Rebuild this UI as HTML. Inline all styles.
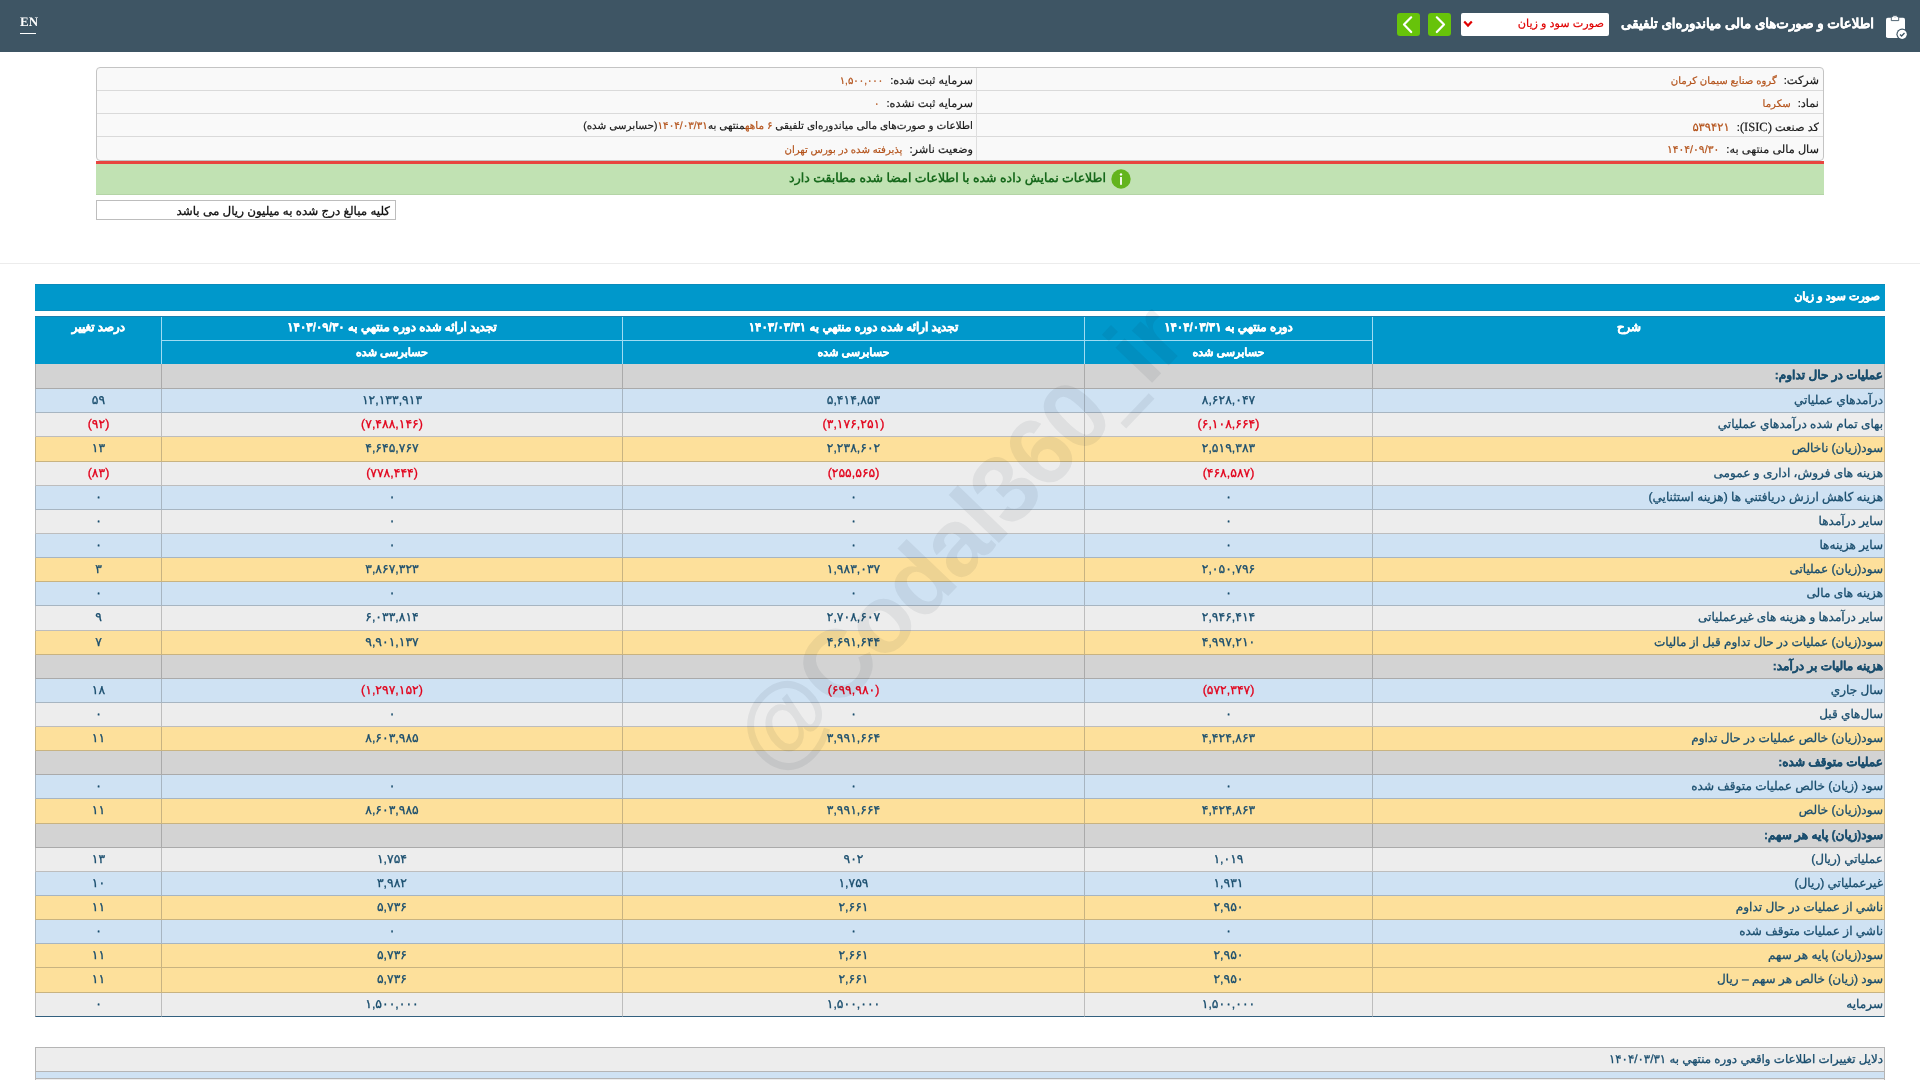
<!DOCTYPE html>
<html lang="fa" dir="rtl">
<head>
<meta charset="utf-8">
<title>اطلاعات و صورت‌های مالی میاندوره‌ای تلفیقی</title>
<style>
*{box-sizing:border-box;margin:0;padding:0}
html,body{width:1920px;height:1080px;overflow:hidden;background:#fff}
body{will-change:transform;font-family:"Liberation Sans",sans-serif;text-rendering:geometricPrecision;font-size:12px;color:#1a4e6e;position:relative;direction:rtl}
.lat{font-family:"Liberation Serif",serif;font-size:12.5px}

/* top bar */
#top{position:absolute;left:0;top:0;width:1920px;height:52px;background:#3e5564}
#top .en{position:absolute;left:20px;top:13px;width:16px;height:21px;color:#fff;font-family:"Liberation Serif",serif;font-weight:bold;font-size:13px;line-height:17px;text-align:center;border-bottom:1px solid #fff;direction:ltr}
#top .ttl{position:absolute;right:46px;top:11px;height:26px;line-height:26px;color:#fff;font-size:13.3px;font-weight:bold;white-space:nowrap;-webkit-text-stroke:.3px #fff}
#top .ico{position:absolute;left:1884px;top:13px;width:24px;height:27px}
#top .sel{position:absolute;left:1461px;top:13px;width:148px;height:23px;background:#fff;border-radius:2px;color:#e00000;-webkit-text-stroke:.2px #e00000;font-size:11.2px;line-height:22px;padding-right:5px;white-space:nowrap}
#top .sel svg{position:absolute;left:2px;top:7px}
#top .btn{position:absolute;top:13px;width:23px;height:23px;background:#67c30a;border-radius:3px}
#top .btn svg{position:absolute;left:0;top:0}

/* info box */
#info{position:absolute;left:96px;top:67px;width:1728px;height:94px;border:1px solid #c4c4c4;border-radius:4px;background:#f9f9f9;color:#1a1a1a;font-size:11.3px}
#info{-webkit-text-stroke:.2px currentColor}
#tbl td,#t2 .a,#note{-webkit-text-stroke:.3px currentColor}
#info .r{position:absolute;left:0;right:0;height:23px;border-bottom:1px solid #dadada}
#info .c1{position:absolute;right:4px;top:1px;line-height:24px;white-space:nowrap}
#info .c2{position:absolute;right:850px;top:1px;line-height:24px;white-space:nowrap}
#info .v{color:#b4531b;margin-right:7px;font-size:10.1px}
#info .vb{color:#b4531b;font-size:10.1px}
#info .r3{font-size:10.4px}
#info .r3 .vb{font-size:10.4px}
#info .vl{position:absolute;left:879px;top:0;width:1px;height:92px;background:#dedede}
#red{position:absolute;left:96px;top:161px;width:1728px;height:3px;background:#e8443f}
#ok{position:absolute;left:96px;top:164px;width:1728px;height:31px;background:#c1e2b3;border-bottom:1px solid #b4d4a6;color:#17691c;font-weight:bold;font-size:12.5px;line-height:29px;text-align:center;white-space:nowrap}
#ok .i{position:absolute;left:1015px;top:5px;width:20px;height:20px}
#ok .t{position:absolute;right:718px;top:0}
#note{position:absolute;left:96px;top:200px;width:300px;height:20px;border:1px solid #bdbdbd;color:#111;font-size:11.9px;line-height:21px;padding-right:5px;white-space:nowrap;text-align:right}
#hr{position:absolute;left:0;top:263px;width:1920px;height:1px;background:#ececec}

/* statement */
#cap{position:absolute;left:35px;top:284px;width:1850px;height:27px;background:#0098cb;border-top:1px solid #0b8bbb;border-bottom:1px solid #0b8bbb;color:#fff;font-weight:bold;font-size:11.15px;line-height:24px;padding-right:5px;white-space:nowrap}
#tbl{position:absolute;left:35px;top:316px;width:1850px;border-top:1px solid #1a7fae;border-collapse:separate;border-spacing:0;table-layout:fixed;direction:rtl}
#tbl th{background:#0098cb;color:#fff;font-weight:bold;font-size:11.85px;height:24px;border-left:1px solid #9fdcf3;border-bottom:1px solid #9fdcf3;vertical-align:middle;text-align:center;white-space:nowrap;padding:0}
#tbl th,#cap{-webkit-text-stroke:.35px #fff}
#tbl th.last{border-left:1px solid #0098cb}
#tbl th.nb{border-bottom:0}
#tbl th.r2{height:23px;font-size:11.1px;padding-bottom:0}
#tbl th.r1{padding-bottom:3px}
#tbl td{height:24px;border-left:1px solid rgba(60,60,60,.27);border-bottom:1px solid rgba(60,60,60,.27);text-align:center;vertical-align:middle;white-space:nowrap;padding:0 0 2px 0;font-size:12.4px;line-height:14px}
#tbl td:first-child{text-align:right;padding-right:1px;border-right:1px solid rgba(60,60,60,.27);font-size:12.05px;padding-bottom:2px}
#tbl tr.h25 td{height:25px}
#tbl tr.g td{background:#d3d3d3;font-weight:bold}
#tbl tr.b td{background:#cfe2f3}
#tbl tr.l td{background:#ededed}
#tbl tr.y td{background:#fde09b}
#tbl tr.end td{border-bottom:1px solid #33607f}
#tbl .n{color:#e2001a}
#t2{position:absolute;left:35px;top:1047px;width:1850px;height:40px;border:1px solid #b5b5b5;background:#ededed}
#t2 .a{height:24px;line-height:23px;border-bottom:1px solid #b5b5b5;padding-right:1px;font-size:11.8px;white-space:nowrap}
#t2 .b{height:7px;background:#cfe2f3;border-bottom:1px solid #b5b5b5}
#wm{position:absolute;left:751px;top:756px;width:0;height:0;direction:ltr}
#wm .w{position:absolute;left:0;top:-55px;height:110px;line-height:110px;font-size:96px;letter-spacing:-3px;font-weight:bold;color:rgba(10,25,40,.068);transform-origin:0 50%;transform:rotate(-46.3deg);white-space:nowrap}
#wm .us{display:inline-block;width:41px;height:8px;background:rgba(10,25,40,.068);vertical-align:-13px;margin:0 3px}
</style>
</head>
<body>
<div id="top">
  <div class="en">EN</div>
  <div class="ico"><svg width="24" height="27" viewBox="0 0 24 27"><rect x="2" y="4.8" width="19" height="20.3" rx="1.8" fill="#fff"/><path d="M7.3 7.6V4.7a1 1 0 0 1 1-1h.5a2.4 2.4 0 0 1 4.4 0h.5a1 1 0 0 1 1 1v2.9z" fill="#fff" stroke="#3e5564" stroke-width=".9"/><path d="M10.3 4.3L11 3.2l.7 1.1z" fill="#3e5564"/><circle cx="18.2" cy="21.3" r="5.8" fill="#3e5564"/><circle cx="18.2" cy="21.3" r="4.6" fill="#fff"/><path d="M16 21.5l1.6 1.5 2.9-3" stroke="#3e5564" stroke-width="1.3" fill="none"/></svg></div>
  <div class="ttl">اطلاعات و صورت‌های مالی میاندوره‌ای تلفیقی</div>
  <div class="sel">صورت سود و زیان<svg width="10" height="8" viewBox="0 0 10 8"><path d="M1.2 1.6L5 5.6L8.8 1.6" stroke="#e00000" stroke-width="2.2" fill="none"/></svg></div>
  <div class="btn" style="left:1428px"><svg width="23" height="23" viewBox="0 0 23 23"><path d="M8.8 4.3L16 11.6L8.8 19" stroke="#fff" stroke-width="2.2" fill="none" stroke-linecap="round" stroke-linejoin="round"/></svg></div>
  <div class="btn" style="left:1397px"><svg width="23" height="23" viewBox="0 0 23 23"><path d="M14.2 4.3L7 11.6L14.2 19" stroke="#fff" stroke-width="2.2" fill="none" stroke-linecap="round" stroke-linejoin="round"/></svg></div>
</div>

<div id="info">
  <div class="r" style="top:0"><span class="c1">شرکت:<span class="v">گروه صنایع سیمان کرمان</span></span><span class="c2">سرمایه ثبت شده:<span class="v">۱,۵۰۰,۰۰۰</span></span></div>
  <div class="r" style="top:23px"><span class="c1">نماد:<span class="v">سکرما</span></span><span class="c2">سرمایه ثبت نشده:<span class="v">۰</span></span></div>
  <div class="r" style="top:46px"><span class="c1">کد صنعت <span class="lat">(ISIC)</span>:<span class="v" style="font-size:11.6px">۵۳۹۴۲۱</span></span><span class="c2 r3">اطلاعات و صورت‌های مالی میاندوره‌ای تلفیقی <span class="vb">۶ ماهه</span>منتهی به<span class="vb">۱۴۰۴/۰۳/۳۱</span>(حسابرسی شده)</span></div>
  <div class="r" style="top:69px;border-bottom:0"><span class="c1">سال مالی منتهی به:<span class="v" style="font-size:10.8px">۱۴۰۴/۰۹/۳۰</span></span><span class="c2">وضعیت ناشر:<span class="v">پذیرفته شده در بورس تهران</span></span></div>
  <div class="vl"></div>
</div>
<div id="red"></div>
<div id="ok"><span class="t">اطلاعات نمایش داده شده با اطلاعات امضا شده مطابقت دارد</span><svg class="i" viewBox="0 0 20 20"><circle cx="10" cy="10" r="9.7" fill="#63b41d"/><circle cx="10" cy="5.4" r="1.2" fill="#fff"/><rect x="9.1" y="8" width="1.8" height="7.8" fill="#fff"/></svg></div>
<div id="note">کلیه مبالغ درج شده به میلیون ریال می باشد</div>
<div id="hr"></div>

<div id="cap">صورت سود و زیان</div>
<table id="tbl">
<colgroup><col style="width:513px"><col style="width:288px"><col style="width:462px"><col style="width:461px"><col style="width:126px"></colgroup>
<tr><th rowspan="2" class="nb" style="vertical-align:top;line-height:21px">شرح</th><th class="r1">دوره منتهي به ۱۴۰۴/۰۳/۳۱</th><th class="r1">تجدید ارائه شده دوره منتهي به ۱۴۰۳/۰۳/۳۱</th><th class="r1">تجدید ارائه شده دوره منتهي به ۱۴۰۳/۰۹/۳۰</th><th rowspan="2" class="nb last" style="vertical-align:top;line-height:21px">درصد تغییر</th></tr>
<tr><th class="nb r2">حسابرسی شده</th><th class="nb r2">حسابرسی شده</th><th class="nb r2">حسابرسی شده</th></tr>
<!--ROWS-->
<tr class="g h25"><td>عملیات در حال تداوم:</td><td></td><td></td><td></td><td></td></tr>
<tr class="b"><td>درآمدهاي عملياتي</td><td>۸,۶۲۸,۰۴۷</td><td>۵,۴۱۴,۸۵۳</td><td>۱۲,۱۳۳,۹۱۳</td><td>۵۹</td></tr>
<tr class="l"><td>بهاى تمام شده درآمدهاي عملياتي</td><td class="n">(۶,۱۰۸,۶۶۴)</td><td class="n">(۳,۱۷۶,۲۵۱)</td><td class="n">(۷,۴۸۸,۱۴۶)</td><td class="n">(۹۲)</td></tr>
<tr class="y h25"><td>سود(زيان) ناخالص</td><td>۲,۵۱۹,۳۸۳</td><td>۲,۲۳۸,۶۰۲</td><td>۴,۶۴۵,۷۶۷</td><td>۱۳</td></tr>
<tr class="l"><td>هزينه هاى فروش، ادارى و عمومى</td><td class="n">(۴۶۸,۵۸۷)</td><td class="n">(۲۵۵,۵۶۵)</td><td class="n">(۷۷۸,۴۴۴)</td><td class="n">(۸۳)</td></tr>
<tr class="b"><td>هزينه کاهش ارزش دريافتني ها (هزينه استثنايي)</td><td>۰</td><td>۰</td><td>۰</td><td>۰</td></tr>
<tr class="l"><td>ساير درآمدها</td><td>۰</td><td>۰</td><td>۰</td><td>۰</td></tr>
<tr class="b"><td>ساير هزينه‌ها</td><td>۰</td><td>۰</td><td>۰</td><td>۰</td></tr>
<tr class="y"><td>سود(زيان) عملياتى</td><td>۲,۰۵۰,۷۹۶</td><td>۱,۹۸۳,۰۳۷</td><td>۳,۸۶۷,۳۲۳</td><td>۳</td></tr>
<tr class="b"><td>هزينه هاى مالى</td><td>۰</td><td>۰</td><td>۰</td><td>۰</td></tr>
<tr class="l h25"><td>ساير درآمدها و هزينه هاى غيرعملياتى</td><td>۲,۹۴۶,۴۱۴</td><td>۲,۷۰۸,۶۰۷</td><td>۶,۰۳۳,۸۱۴</td><td>۹</td></tr>
<tr class="y"><td>سود(زيان) عمليات در حال تداوم قبل از ماليات</td><td>۴,۹۹۷,۲۱۰</td><td>۴,۶۹۱,۶۴۴</td><td>۹,۹۰۱,۱۳۷</td><td>۷</td></tr>
<tr class="g"><td>هزينه ماليات بر درآمد:</td><td></td><td></td><td></td><td></td></tr>
<tr class="b"><td>سال جاري</td><td class="n">(۵۷۲,۳۴۷)</td><td class="n">(۶۹۹,۹۸۰)</td><td class="n">(۱,۲۹۷,۱۵۲)</td><td>۱۸</td></tr>
<tr class="l"><td>سال‌هاي قبل</td><td>۰</td><td>۰</td><td>۰</td><td>۰</td></tr>
<tr class="y"><td>سود(زيان) خالص عمليات در حال تداوم</td><td>۴,۴۲۴,۸۶۳</td><td>۳,۹۹۱,۶۶۴</td><td>۸,۶۰۳,۹۸۵</td><td>۱۱</td></tr>
<tr class="g"><td>عملیات متوقف شده:</td><td></td><td></td><td></td><td></td></tr>
<tr class="b"><td>سود (زيان) خالص عمليات متوقف شده</td><td>۰</td><td>۰</td><td>۰</td><td>۰</td></tr>
<tr class="y h25"><td>سود(زيان) خالص</td><td>۴,۴۲۴,۸۶۳</td><td>۳,۹۹۱,۶۶۴</td><td>۸,۶۰۳,۹۸۵</td><td>۱۱</td></tr>
<tr class="g"><td>سود(زيان) پايه هر سهم:</td><td></td><td></td><td></td><td></td></tr>
<tr class="l"><td>عملياتي (ريال)</td><td>۱,۰۱۹</td><td>۹۰۲</td><td>۱,۷۵۴</td><td>۱۳</td></tr>
<tr class="b"><td>غيرعملياتي (ريال)</td><td>۱,۹۳۱</td><td>۱,۷۵۹</td><td>۳,۹۸۲</td><td>۱۰</td></tr>
<tr class="y"><td>ناشي از عمليات در حال تداوم</td><td>۲,۹۵۰</td><td>۲,۶۶۱</td><td>۵,۷۳۶</td><td>۱۱</td></tr>
<tr class="b"><td>ناشي از عمليات متوقف شده</td><td>۰</td><td>۰</td><td>۰</td><td>۰</td></tr>
<tr class="y"><td>سود(زيان) پايه هر سهم</td><td>۲,۹۵۰</td><td>۲,۶۶۱</td><td>۵,۷۳۶</td><td>۱۱</td></tr>
<tr class="y h25"><td>سود (زيان) خالص هر سهم – ريال</td><td>۲,۹۵۰</td><td>۲,۶۶۱</td><td>۵,۷۳۶</td><td>۱۱</td></tr>
<tr class="l end"><td>سرمايه</td><td>۱,۵۰۰,۰۰۰</td><td>۱,۵۰۰,۰۰۰</td><td>۱,۵۰۰,۰۰۰</td><td>۰</td></tr>
</table>
<div id="t2"><div class="a">دلایل تغییرات اطلاعات واقعي دوره منتهي به ۱۴۰۴/۰۳/۳۱</div><div class="b"></div></div>
<div id="wm"><div class="w"><span id="wa">@</span>Codal36<span id="w0">0</span><span class="us"></span><span id="wi">i</span>r</div></div>
</body>
</html>
